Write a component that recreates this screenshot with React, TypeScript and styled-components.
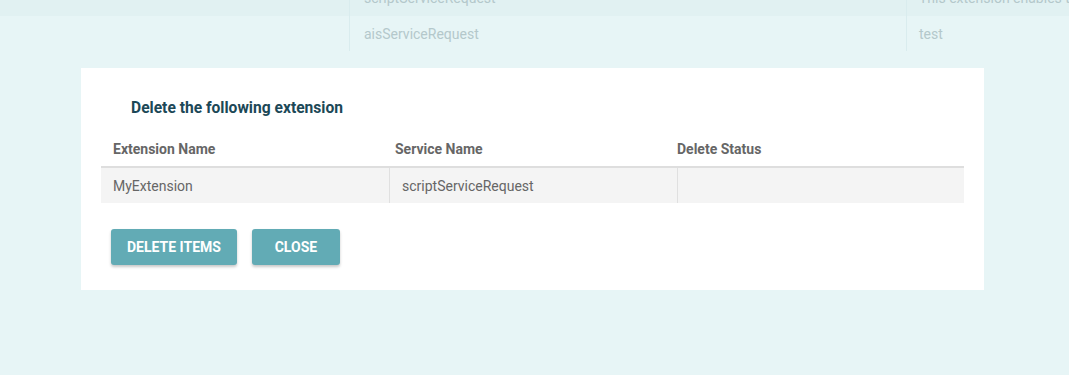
import React from "react";
import styled, { createGlobalStyle } from "styled-components";

const Global = createGlobalStyle`
  html, body { margin: 0; padding: 0; }
  body {
    background: #e7f5f6;
    font-family: Roboto, "Liberation Sans", Arial, sans-serif;
    overflow: hidden;
  }
`;

const Page = styled.div`
  width: 1069px;
  height: 375px;
  overflow: hidden;
`;

const BgTable = styled.div`
  margin-top: -20px;
  display: flex;
  flex-direction: column;
`;

const BgRow = styled.div<{ $shade?: boolean; $h: number }>`
  display: grid;
  grid-template-columns: 349px 557px 1fr;
  height: ${(p) => p.$h}px;
  background: ${(p) => (p.$shade ? "#e1f1f2" : "transparent")};
`;

const BgCell = styled.div<{ $divider?: boolean; $pad?: number }>`
  display: flex;
  align-items: center;
  padding-left: ${(p) => p.$pad ?? 13}px;
  font-size: 14px;
  color: #b4c8cb;
  white-space: nowrap;
  overflow: hidden;
  border-left: ${(p) => (p.$divider ? "1px solid #d9ecee" : "none")};
`;

const Modal = styled.div`
  margin: 17px 0 0 81px;
  width: 903px;
  background: #ffffff;
  padding: 30px 20px 25px;
  box-sizing: border-box;
`;

const Title = styled.h2`
  margin: 0 0 14px 30px;
  font-size: 15.6px;
  font-weight: 700;
  color: #1c4857;
  line-height: 20px;
`;

const Table = styled.div`
  display: flex;
  flex-direction: column;
`;

const HeadRow = styled.div`
  display: grid;
  grid-template-columns: 282px 282px 1fr;
  height: 34px;
  border-bottom: 2px solid #dedede;
`;

const HeadCell = styled.div`
  display: flex;
  align-items: center;
  padding: 0 12px;
  font-size: 14px;
  font-weight: 700;
  color: #666666;
`;

const BodyRow = styled.div`
  display: grid;
  grid-template-columns: 288px 288px 1fr;
  height: 35px;
  background: #f4f4f4;
`;

const BodyCell = styled.div<{ $divider?: boolean }>`
  display: flex;
  align-items: center;
  padding: 0 12px;
  font-size: 14px;
  color: #666666;
  border-left: ${(p) => (p.$divider ? "1px solid #e0e0e0" : "none")};
`;

const Actions = styled.div`
  display: flex;
  gap: 15px;
  margin: 26px 0 0 10px;
`;

const Button = styled.button<{ $w?: number }>`
  height: 36px;
  width: ${(p) => (p.$w ? `${p.$w}px` : "auto")};
  padding: 0 16px;
  border: none;
  border-radius: 3px;
  background: #62abb5;
  color: #ffffff;
  font-family: Roboto, "Liberation Sans", Arial, sans-serif;
  font-size: 14px;
  font-weight: 700;
  text-transform: uppercase;
  box-shadow: 0 2px 3px rgba(0, 0, 0, 0.22);
  cursor: pointer;
`;

export default function App() {
  return (
    <Page>
      <Global />
      <BgTable>
        <BgRow $shade $h={36}>
          <BgCell />
          <BgCell $divider $pad={14}>scriptServiceRequest</BgCell>
          <BgCell $divider $pad={12}>This extension enables the script service</BgCell>
        </BgRow>
        <BgRow $h={35}>
          <BgCell />
          <BgCell $divider $pad={14}>aisServiceRequest</BgCell>
          <BgCell $divider $pad={12}>test</BgCell>
        </BgRow>
      </BgTable>
      <Modal>
        <Title>Delete the following extension</Title>
        <Table>
          <HeadRow>
            <HeadCell>Extension Name</HeadCell>
            <HeadCell>Service Name</HeadCell>
            <HeadCell>Delete Status</HeadCell>
          </HeadRow>
          <BodyRow>
            <BodyCell>MyExtension</BodyCell>
            <BodyCell $divider>scriptServiceRequest</BodyCell>
            <BodyCell $divider></BodyCell>
          </BodyRow>
        </Table>
        <Actions>
          <Button>Delete Items</Button>
          <Button $w={88}>Close</Button>
        </Actions>
      </Modal>
    </Page>
  );
}
